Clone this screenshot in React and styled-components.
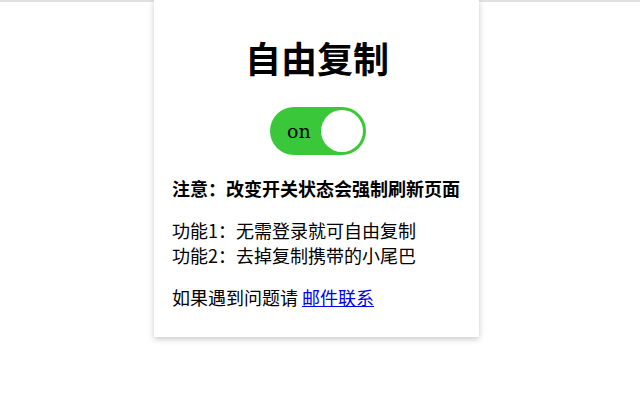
import React, { useState } from "react";
import styled, { createGlobalStyle } from "styled-components";

const Global = createGlobalStyle`
  html, body { margin: 0; padding: 0; background: #fff; }
  body { font-family: "Noto Sans CJK SC", "Noto Sans", sans-serif; color: #000; }
`;

const Page = styled.div`
  position: relative;
  width: 640px;
  height: 400px;
  border-top: 2px solid #e0e0e0;
  box-sizing: border-box;
  display: flex;
  justify-content: center;
  align-items: flex-start;
  padding-right: 7px;
`;

const Card = styled.div`
  width: 325px;
  box-sizing: border-box;
  margin-top: -2px;
  padding: 32px 18px 27px;
  background: #fff;
  box-shadow: 0 2px 6px rgba(0, 0, 0, 0.22);
  position: relative;
  z-index: 1;
`;

const Title = styled.h1`
  margin: 0;
  font-size: 36px;
  line-height: 50px;
  font-weight: 700;
  text-align: center;
  padding-left: 1px;
`;

const SwitchRow = styled.div`
  display: flex;
  justify-content: center;
  margin-top: 25px;
  padding-left: 3px;
`;

const Track = styled.button`
  width: 96px;
  height: 48px;
  border: none;
  border-radius: 24px;
  background: ${(p) => (p.$on ? "#3ac83a" : "#ccc")};
  padding: 0 3px 0 17px;
  display: flex;
  align-items: center;
  justify-content: space-between;
  cursor: pointer;
  box-sizing: border-box;
`;

const Label = styled.span`
  font-family: "DejaVu Serif", serif;
  font-size: 19px;
  color: #000;
`;

const Knob = styled.span`
  width: 42px;
  height: 42px;
  border-radius: 50%;
  background: #fff;
`;

const Note = styled.p`
  margin: 21px 0 0;
  font-size: 18px;
  line-height: 25px;
  font-weight: 700;
  white-space: nowrap;
`;

const Lines = styled.div`
  margin-top: 17px;
  font-size: 18px;
  line-height: 25px;
`;

const Contact = styled.p`
  margin: 17px 0 0;
  font-size: 18px;
  line-height: 25px;
`;

const MailLink = styled.a`
  color: #0000ee;
  text-decoration: underline;
`;

export default function App() {
  const [on, setOn] = useState(true);
  return (
    <>
      <Global />
      <Page>
        <Card>
          <Title>自由复制</Title>
          <SwitchRow>
            <Track $on={on} onClick={() => setOn(!on)}>
              <Label>on</Label>
              <Knob />
            </Track>
          </SwitchRow>
          <Note>注意：改变开关状态会强制刷新页面</Note>
          <Lines>
            <div>功能1：无需登录就可自由复制</div>
            <div>功能2：去掉复制携带的小尾巴</div>
          </Lines>
          <Contact>
            如果遇到问题请 <MailLink href="#">邮件联系</MailLink>
          </Contact>
        </Card>
      </Page>
    </>
  );
}
